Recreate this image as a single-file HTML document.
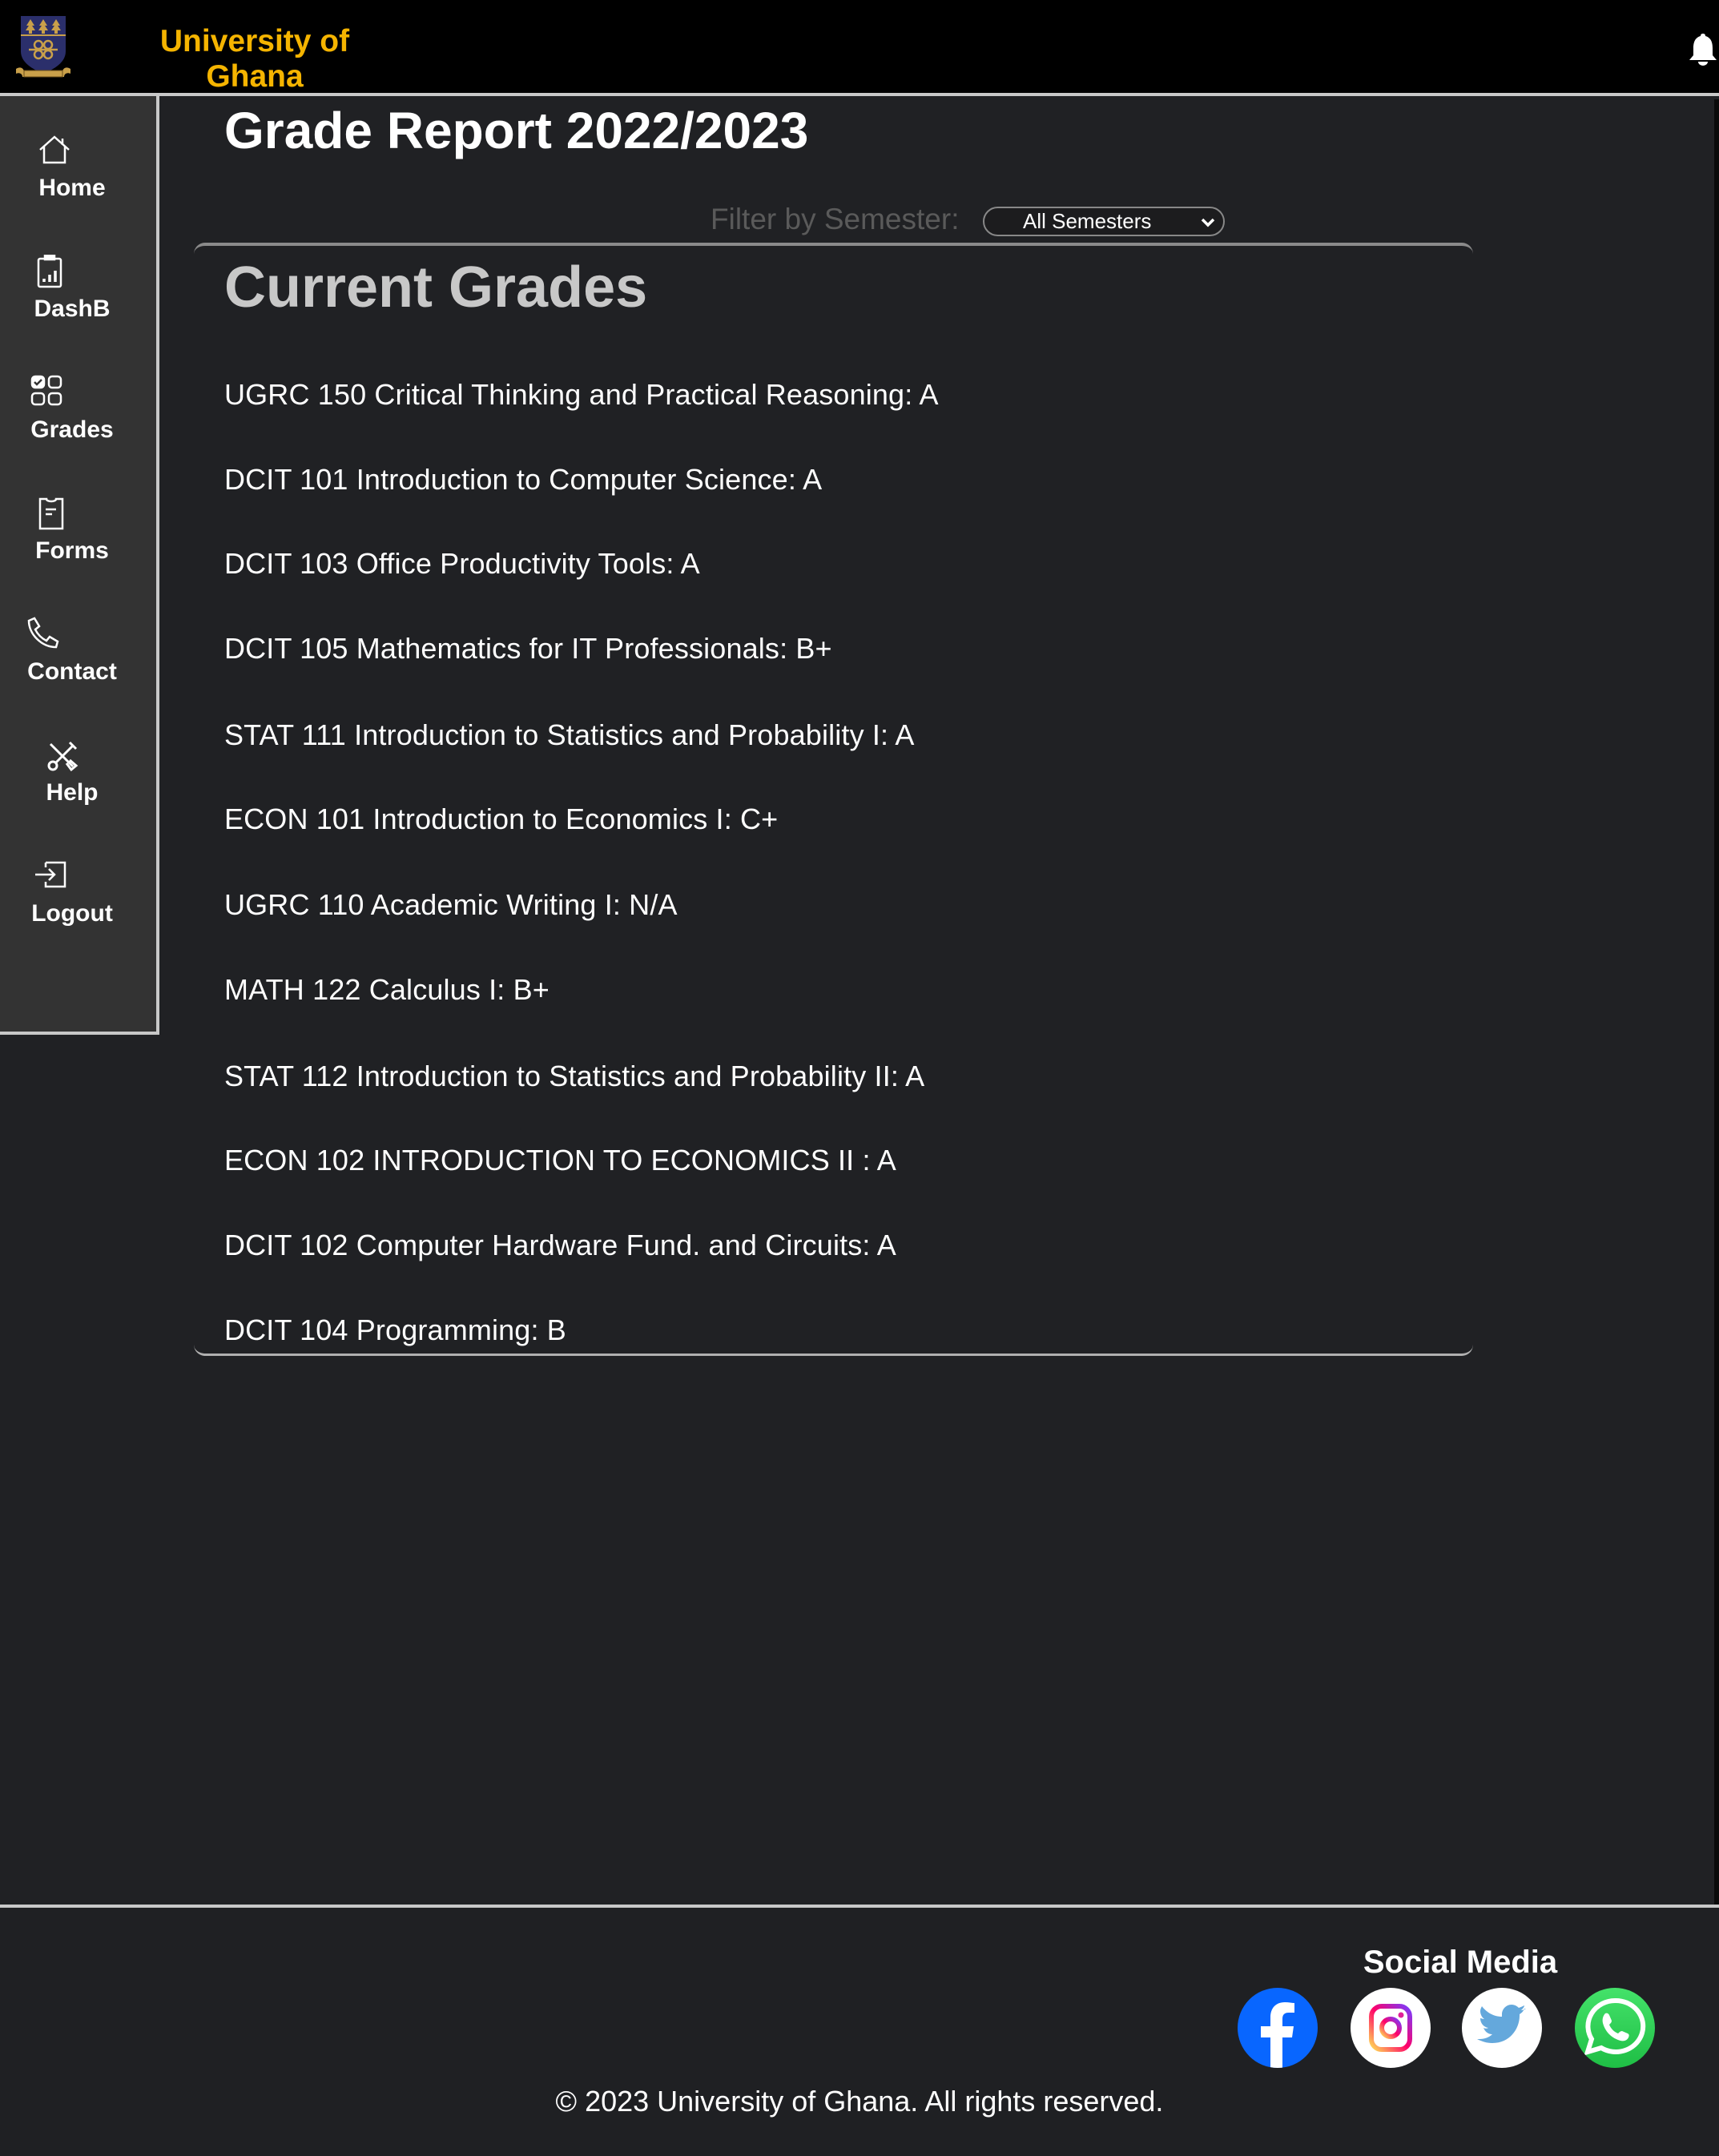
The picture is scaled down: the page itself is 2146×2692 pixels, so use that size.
<!DOCTYPE html>
<html><head><meta charset="utf-8"><style>
*{margin:0;padding:0;box-sizing:border-box}
body{width:2146px;height:2692px;background:#202124;font-family:"Liberation Sans",sans-serif;position:relative;overflow:hidden;color:#fff}
.abs{position:absolute}
#hdr{left:0;top:0;width:2146px;height:120px;background:#000;border-bottom:4px solid #c8c8c8}
#side{left:0;top:120px;width:199px;height:1172px;background:#333;border-right:4px solid #c8c8c8;border-bottom:4px solid #c8c8c8}
.lb{position:absolute;left:0;width:180px;text-align:center;font-weight:bold;font-size:30px;color:#fff;line-height:34px}
.ic{position:absolute}
.g{position:absolute;left:280px;font-size:36px;letter-spacing:0.15px;color:#fff;white-space:nowrap;line-height:40px}
#card{left:242px;top:303px;width:1597px;height:1390px;border-top:4px solid #8a8a8a;border-bottom:3px solid #b0b0b0;border-radius:14px}
#foot{left:0;top:2378px;width:2146px;height:314px;background:#1f2023;border-top:4px solid #c8c8c8}
.soc{position:absolute;top:2482px;width:100px;height:100px;border-radius:50%;overflow:hidden}
</style></head><body>
<div id="hdr" class="abs"></div>
<svg class="abs" style="left:18px;top:18px" width="72" height="82" viewBox="0 0 72 82">
<path d="M8 2h56v44c0 14-14 22-28 28C22 68 8 60 8 46z" fill="#2b2f6b"/>
<line x1="8" y1="26" x2="64" y2="26" stroke="#c9a04a" stroke-width="2"/>
<g fill="#c9a04a"><path d="M20 6l5 8h-3l4 6h-4v4h-4v-4h-4l4-6h-3z"/><path d="M36 6l5 8h-3l4 6h-4v4h-4v-4h-4l4-6h-3z"/><path d="M52 6l5 8h-3l4 6h-4v4h-4v-4h-4l4-6h-3z"/></g>
<g fill="none" stroke="#c9a04a" stroke-width="2.5"><circle cx="30" cy="38" r="5"/><circle cx="42" cy="38" r="5"/><circle cx="30" cy="50" r="5"/><circle cx="42" cy="50" r="5"/><line x1="18" y1="44" x2="54" y2="44"/></g>
<path d="M2 68c6-4 10 0 10 4h48c0-4 4-8 10-4v6c-4-2-8 0-8 4H10c0-4-4-6-8-4z" fill="#c9a04a"/>
<rect x="12" y="70" width="48" height="8" fill="#c9a04a" stroke="#6a4e1a" stroke-width="1"/>
</svg>
<div class="abs" style="left:168px;top:30px;width:300px;text-align:center;color:#f5b400;font-weight:bold;font-size:39px;line-height:44px">University of<br>Ghana</div>
<svg class="abs" style="left:2108px;top:40px" width="36" height="44" viewBox="0 0 36 44"><path d="M18 2c-2 0-3 1-3 3C8 7 6 13 6 20v9l-5 6h34l-5-6v-9c0-7-2-13-9-15 0-2-1-3-3-3z" fill="#fff"/><path d="M12 37a6 5 0 0012 0z" fill="#fff"/></svg>
<div id="side" class="abs"></div>
<svg class="ic" style="left:48px;top:168px" width="40" height="40" viewBox="0 0 40 40" fill="none" stroke="#fff" stroke-width="2.5"><path d="M2 19L20 3l18 16M7 15v20h26V15"/><path d="M30 5v8"/></svg>
<div class="lb" style="top:218px">Home</div>
<svg class="ic" style="left:46px;top:318px" width="32" height="42" viewBox="0 0 32 42" fill="none" stroke="#fff" stroke-width="2.5"><rect x="2" y="5" width="28" height="35" rx="2"/><rect x="10" y="1" width="12" height="5" fill="#fff"/><path d="M9 34v-4M16 34v-9M23 34v-14" stroke-width="3.5"/></svg>
<div class="lb" style="top:369px">DashB</div>
<svg class="ic" style="left:38px;top:468px" width="40" height="40" viewBox="0 0 40 40" fill="none" stroke="#fff" stroke-width="2.5"><rect x="2" y="2" width="15" height="14" rx="4" fill="#fff"/><path d="M5 9l3 3 6-6" stroke="#333"/><rect x="23" y="2" width="15" height="14" rx="4"/><rect x="2" y="23" width="15" height="14" rx="4"/><rect x="23" y="23" width="15" height="14" rx="4"/></svg>
<div class="lb" style="top:520px">Grades</div>
<svg class="ic" style="left:48px;top:620px" width="32" height="42" viewBox="0 0 32 42" fill="none" stroke="#fff" stroke-width="2.5"><path d="M2 3h8c0 4 12 4 12 0h8v37H2z"/><path d="M9 16h13M9 22h8"/></svg>
<div class="lb" style="top:671px">Forms</div>
<svg class="ic" style="left:33px;top:770px" width="42" height="42" viewBox="0 0 42 42" fill="none" stroke="#fff" stroke-width="2.5"><path d="M3 5l7-3 6 10-5 4c3 6 8 11 14 14l4-5 10 6-2 7c-18 0-34-16-34-33z"/></svg>
<div class="lb" style="top:822px">Contact</div>
<svg class="ic" style="left:57px;top:923px" width="42" height="42" viewBox="0 0 42 42" fill="none" stroke="#fff" stroke-width="3"><path d="M12 30L34 8M30 4l8 8"/><circle cx="9" cy="33" r="5"/><path d="M6 6l28 28M26 30l6 8 6-5-8-7"/></svg>
<div class="lb" style="top:973px">Help</div>
<svg class="ic" style="left:43px;top:1075px" width="40" height="34" viewBox="0 0 40 34" fill="none" stroke="#fff" stroke-width="2.5"><path d="M14 2h24v30H14v-6M14 8V2"/><path d="M1 17h24M18 10l7 7-7 7"/></svg>
<div class="lb" style="top:1124px">Logout</div>
<div class="abs" style="left:280px;top:126px;font-size:64px;font-weight:bold;white-space:nowrap">Grade Report 2022/2023</div>
<div class="abs" style="left:887px;top:253px;font-size:37px;color:#5a5a5a;white-space:nowrap">Filter by Semester:</div>
<div class="abs" style="left:1227px;top:258px;width:302px;height:37px;border:2px solid #888;border-radius:19px;background:#1c1c1e;font-size:26px;line-height:33px;padding-left:48px">All Semesters<svg style="position:absolute;right:10px;top:11px" width="18" height="14" viewBox="0 0 18 14"><path d="M2 3l7 7 7-7" fill="none" stroke="#fff" stroke-width="3.5"/></svg></div>
<div id="card" class="abs"></div>
<div class="abs" style="left:280px;top:318px;font-size:72px;font-weight:bold;color:#c8c8c8;white-space:nowrap">Current Grades</div>
<div class="g" style="top:473px">UGRC 150 Critical Thinking and Practical Reasoning: A</div>
<div class="g" style="top:579px">DCIT 101 Introduction to Computer Science: A</div>
<div class="g" style="top:684px">DCIT 103 Office Productivity Tools: A</div>
<div class="g" style="top:790px">DCIT 105 Mathematics for IT Professionals: B+</div>
<div class="g" style="top:898px">STAT 111 Introduction to Statistics and Probability I: A</div>
<div class="g" style="top:1003px">ECON 101 Introduction to Economics I: C+</div>
<div class="g" style="top:1110px">UGRC 110 Academic Writing I: N/A</div>
<div class="g" style="top:1216px">MATH 122 Calculus I: B+</div>
<div class="g" style="top:1324px">STAT 112 Introduction to Statistics and Probability II: A</div>
<div class="g" style="top:1429px">ECON 102 INTRODUCTION TO ECONOMICS II : A</div>
<div class="g" style="top:1535px">DCIT 102 Computer Hardware Fund. and Circuits: A</div>
<div class="g" style="top:1641px">DCIT 104 Programming: B</div>
<div class="abs" style="left:2140px;top:124px;width:6px;height:2254px;background:#0a0a0a"></div>
<div id="foot" class="abs"></div>
<div class="abs" style="left:1623px;top:2428px;width:400px;text-align:center;font-size:40px;font-weight:bold">Social Media</div>
<div class="soc" style="left:1545px;background:#0866ff"><svg width="100" height="100" viewBox="0 0 100 100"><path d="M56 100V62h12l2-14H56v-9c0-5 2-8 8-8h7V19c-3 0-7-1-12-1-11 0-18 7-18 19v11H29v14h12v38z" fill="#fff"/></svg></div>
<div class="soc" style="left:1686px;background:#fff"><svg width="100" height="100" viewBox="0 0 100 100"><defs><linearGradient id="ig" x1="0" y1="1" x2="1" y2="0"><stop offset="0" stop-color="#fd5"/><stop offset=".5" stop-color="#ff0069"/><stop offset="1" stop-color="#7a3cff"/></linearGradient></defs><rect x="26" y="23" width="48" height="54" rx="13" fill="none" stroke="url(#ig)" stroke-width="6"/><circle cx="50" cy="50" r="11" fill="none" stroke="url(#ig)" stroke-width="6"/><circle cx="63" cy="34" r="3.5" fill="#e0209a"/></svg></div>
<div class="soc" style="left:1825px;background:#fff"><svg width="100" height="100" viewBox="0 0 100 100"><path d="M80 26c-2 1-4 2-6 2 2-2 4-4 4-6-2 1-4 2-7 3-2-2-5-4-9-4-7 0-12 6-12 12v3c-10 0-19-5-25-13-1 2-2 4-2 6 0 4 2 8 5 10-2 0-4-1-5-1 0 6 4 11 10 12-2 1-4 1-6 0 2 5 6 8 11 8-4 4-10 6-16 6h-3c6 3 12 5 19 5 22 0 34-18 34-34v-2c3-2 5-4 6-7z" fill="#64a8dc"/></svg></div>
<div class="soc" style="left:1966px;background:linear-gradient(#44e26a,#1fbe45)"><svg width="100" height="100" viewBox="0 0 100 100"><path d="M50 16a34 32 0 00-29 48l-5 16 17-5a34 32 0 1017-59z" fill="none" stroke="#fff" stroke-width="6"/><path d="M38 32c2-1 4 0 5 2l3 7c0 2-1 3-3 5 2 5 6 9 11 11 2-2 3-3 5-3l7 3c2 1 2 3 1 5-2 4-6 5-10 4-11-3-19-11-22-22-1-4 0-9 3-12z" fill="#fff"/></svg></div>
<div class="abs" style="left:0;top:2603px;width:2146px;text-align:center;font-size:36px">© 2023 University of Ghana. All rights reserved.</div>
</body></html>
